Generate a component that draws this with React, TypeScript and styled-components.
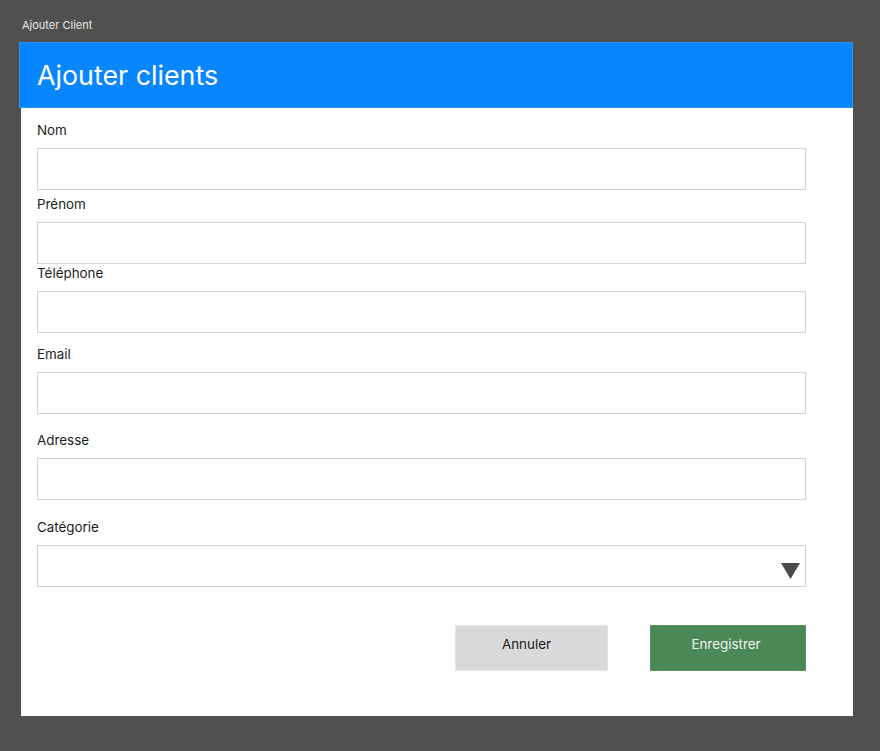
import React from "react";
import styled, { createGlobalStyle } from "styled-components";

const Global = createGlobalStyle`
  html, body { margin: 0; padding: 0; background: #52504e; }
  body { font-family: Inter, "Noto Sans", sans-serif; }
  * { box-sizing: border-box; }
`;

const Page = styled.div`
  width: 880px;
  height: 751px;
  padding: 18px 0 0 21px;
  display: flex;
  flex-direction: column;
`;

const Caption = styled.div`
  font-size: 11px;
  line-height: 14px;
  color: #e6e6e6;
  margin-left: 1px;
  height: 14px;
`;

const Panel = styled.div`
  margin-top: 10px;
  width: 832px;
  height: 674px;
  background: #ffffff;
  display: flex;
  flex-direction: column;
`;

const Header = styled.div`
  margin-left: -2px;
  width: 834px;
  height: 66px;
  background: #0786fd;
  border: 1px solid #2a90f0;
  display: flex;
  align-items: center;
  padding-left: 17px;
`;

const Title = styled.h1`
  margin: 0;
  font-size: 26.8px;
  font-weight: 400;
  color: #ffffff;
  line-height: 32px;
`;

const Form = styled.div`
  padding: 14px 0 0 16px;
  display: flex;
  flex-direction: column;
`;

const Field = styled.div<{ $gap: number }>`
  display: flex;
  flex-direction: column;
  margin-top: ${(p) => p.$gap}px;
`;

const Label = styled.label`
  font-size: 13.4px;
  line-height: 16px;
  color: #1c1c1c;
  height: 16px;
`;

const InputWrap = styled.div`
  position: relative;
  margin-top: 10px;
  width: 769px;
  height: 42px;
`;

const Input = styled.input`
  width: 100%;
  height: 100%;
  border: 1px solid #d2d2d2;
  background: #ffffff;
  outline: none;
  padding: 0 10px;
  font-family: inherit;
  font-size: 13px;
`;

const Arrow = styled.svg`
  position: absolute;
  right: 6px;
  top: 18px;
  width: 19px;
  height: 16px;
`;

const Actions = styled.div`
  margin-top: 38px;
  width: 769px;
  display: flex;
  justify-content: flex-end;
  gap: 42px;
`;

const Button = styled.button<{ $primary?: boolean; $w: number; $shift: number }>`
  width: ${(p) => p.$w}px;
  height: 46px;
  border: 1px solid ${(p) => (p.$primary ? "#5a9566" : "#e6e6e6")};
  background: ${(p) => (p.$primary ? "#4a8856" : "#d9d9d9")};
  color: ${(p) => (p.$primary ? "#f2f2f2" : "#1a1a1a")};
  font-family: inherit;
  font-size: 13.4px;
  line-height: 16px;
  padding: 10px ${(p) => p.$shift}px 0 0;
  display: flex;
  justify-content: center;
  align-items: flex-start;
  cursor: pointer;
`;

const fields: { label: string; gap: number; select?: boolean }[] = [
  { label: "Nom", gap: 0 },
  { label: "Prénom", gap: 6 },
  { label: "Téléphone", gap: 1 },
  { label: "Email", gap: 13 },
  { label: "Adresse", gap: 18 },
  { label: "Catégorie", gap: 19, select: true },
];

export default function App() {
  return (
    <>
      <Global />
      <Page>
        <Caption>Ajouter Client</Caption>
        <Panel>
          <Header>
            <Title>Ajouter clients</Title>
          </Header>
          <Form>
            {fields.map((f) => (
              <Field key={f.label} $gap={f.gap}>
                <Label>{f.label}</Label>
                <InputWrap>
                  <Input readOnly={f.select} />
                  {f.select && (
                    <Arrow viewBox="0 0 19 16">
                      <polygon points="0,0 19,0 9.5,16" fill="#4a4a4a" />
                    </Arrow>
                  )}
                </InputWrap>
              </Field>
            ))}
            <Actions>
              <Button $w={153} $shift={10}>Annuler</Button>
              <Button $primary $w={156} $shift={4}>Enregistrer</Button>
            </Actions>
          </Form>
        </Panel>
      </Page>
    </>
  );
}
